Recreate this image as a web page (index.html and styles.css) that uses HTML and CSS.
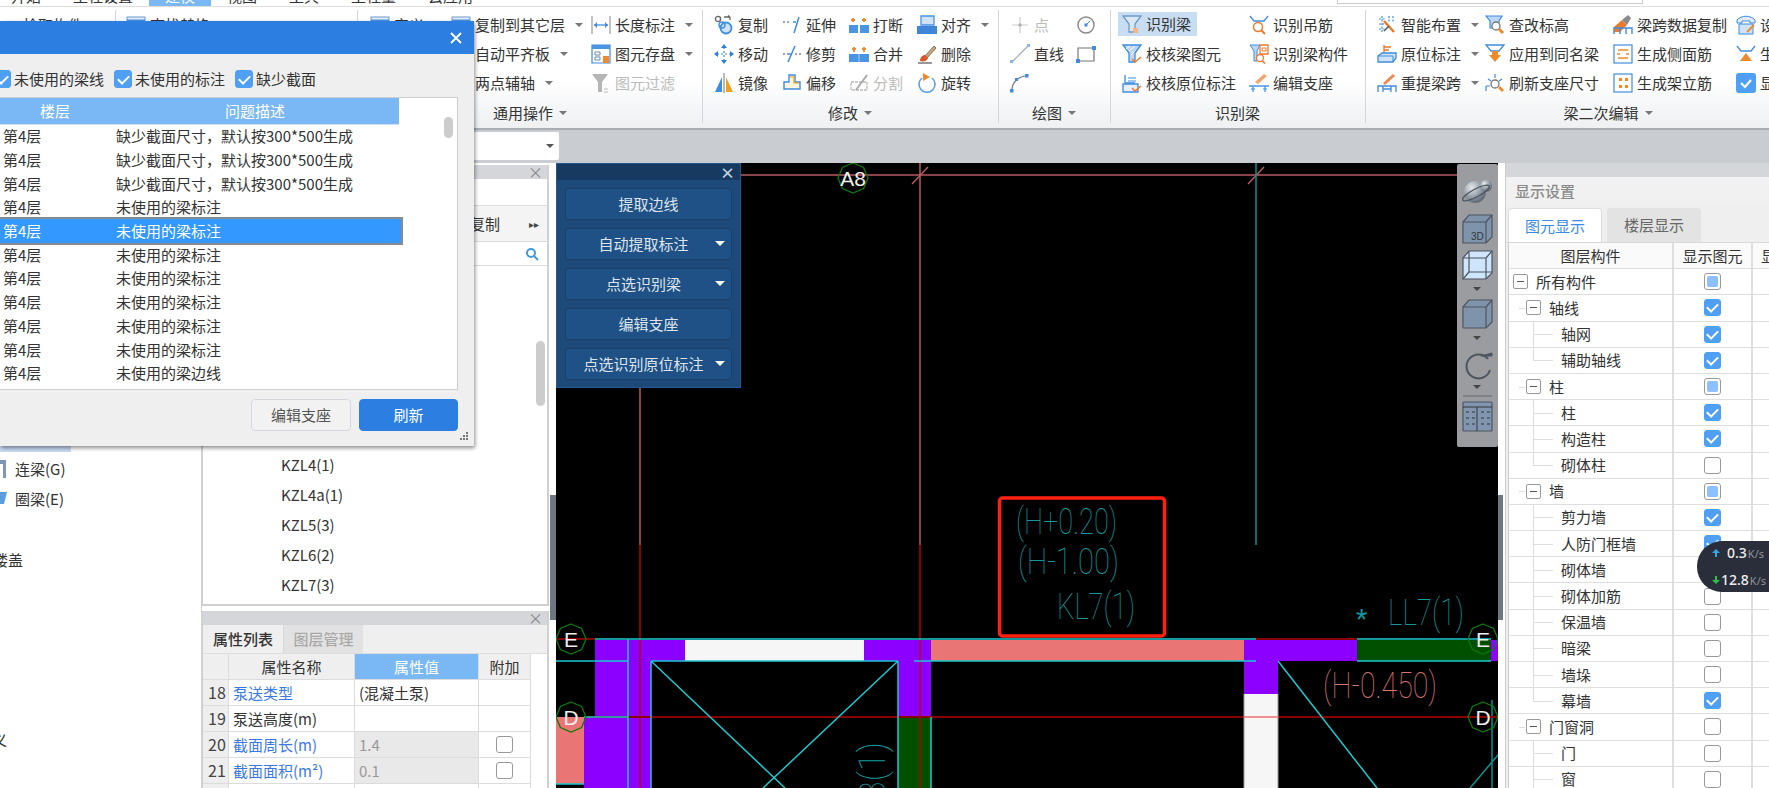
FILE: index.html
```html
<!DOCTYPE html>
<html lang="zh-CN">
<head>
<meta charset="utf-8">
<title>识别梁</title>
<link rel="stylesheet" href="styles.css">
</head>
<body>
<svg class="defs" width="0" height="0">
  <symbol id="copy" viewBox="0 0 20 20"><circle cx="4" cy="4" r="2.6" fill="none" stroke="#666" stroke-width="1.4"/><path d="M10 2h6M16 2l-2-1.500M16 2v3" fill="none" stroke="#666" stroke-width="1.3"/><circle cx="12" cy="13" r="5.500" fill="#cfe2f7" stroke="#3f8ce0" stroke-width="1.800"/><circle cx="8" cy="10" r="3" fill="none" stroke="#3f8ce0" stroke-width="1.400"/></symbol>
  <symbol id="extend" viewBox="0 0 20 20"><path d="M1 7h8" stroke="#7a8a9a" stroke-width="1.400" stroke-dasharray="2 2" fill="none"/><path d="M11 7h3M17 2l-5 16" stroke="#3f8ce0" stroke-width="1.500" fill="none"/></symbol>
  <symbol id="break" viewBox="0 0 20 20"><path d="M0 10h9v8H0zM11 10h9v8h-9z" fill="#4a94e4"/><path d="M4 3v4M2 5h4M15 3v4M13 5h4" stroke="#ee8a2c" stroke-width="1.800"/></symbol>
  <symbol id="merge" viewBox="0 0 20 20"><path d="M0 10h20v8H0z" fill="#4a94e4"/><path d="M10 10v8" stroke="#a8ccf2"/><path d="M5 3v5M3 5h4M15 3v5M13 5h4" stroke="#ee8a2c" stroke-width="1.800"/></symbol>
  <symbol id="align" viewBox="0 0 20 20"><path d="M4 1h13v9H4z" fill="#cfe2f7" stroke="#4a94e4" stroke-width="1.300"/><path d="M0 11h20v8H0z" fill="#3f86d8"/></symbol>
  <symbol id="move" viewBox="0 0 20 20"><path d="M10 3v14M3 10h14" stroke="#3f8ce0" stroke-width="1.200" stroke-dasharray="2 2"/><path d="M10 0l3 4H7zM10 20l3-4H7zM0 10l4-3v6zM20 10l-4-3v6z" fill="#2f7fd8"/></symbol>
  <symbol id="trim" viewBox="0 0 20 20"><path d="M1 10h5M13 10h6" stroke="#7a8a9a" stroke-width="1.400" stroke-dasharray="2 2" fill="none"/><path d="M6 10h4M13 2l-7 16" stroke="#3f8ce0" stroke-width="1.500" fill="none"/></symbol>
  <symbol id="brush" viewBox="0 0 20 20"><path d="M8 12L17 2l2 2-9 10z" fill="#c8a878" stroke="#6a5a48" stroke-width=".8"/><path d="M3 17c0-4 3-6 5-6l3 3c-1 3-4 4-8 3z" fill="#d8552a"/><path d="M1 19h14" stroke="#555" stroke-width="1.200"/></symbol>
  <symbol id="mirror" viewBox="0 0 20 20"><path d="M8 4v15H1z" fill="#3f8ce0"/><path d="M12 4v15h7z" fill="#f0a020"/><path d="M10 0v20" stroke="#777"/></symbol>
  <symbol id="offset" viewBox="0 0 20 20"><path d="M7 2h6v7h5v7H2V9h5z" fill="#fff6dc" stroke="#3f8ce0" stroke-width="1.400"/><path d="M8 4h4v6h5" fill="none" stroke="#f0a020" stroke-width="1.200"/></symbol>
  <symbol id="split" viewBox="0 0 20 20"><path d="M2 9h16v8H2z" fill="none" stroke="#bbb" stroke-width="1.300" stroke-dasharray="3 1"/><path d="M7 17L18 2" stroke="#aaa" stroke-width="2"/></symbol>
  <symbol id="rotate" viewBox="0 0 20 20"><path d="M5 5a8 8 0 1 0 10 0" fill="none" stroke="#5a9fe4" stroke-width="1.600"/><path d="M6 0l7 4-7 4z" fill="#ee8a2c"/></symbol>
  <symbol id="pt" viewBox="0 0 20 20"><path d="M10 2v16M2 10h16" stroke="#ccc" stroke-width="1.200"/><circle cx="10" cy="10" r="1.800" fill="#b5b5b5"/></symbol>
  <symbol id="circ" viewBox="0 0 20 20"><circle cx="10" cy="10" r="8" fill="#fff" stroke="#888" stroke-width="1.400"/><path d="M10 10l4-4" stroke="#3f8ce0"/><rect x="8.500" y="8.500" width="3" height="3" fill="#3f8ce0"/></symbol>
  <symbol id="ln" viewBox="0 0 20 20"><path d="M2 18L18 2" stroke="#9ab" stroke-width="1.200"/><rect x="0" y="16" width="3" height="3" fill="#8ab8ec"/><rect x="17" y="0" width="3" height="3" fill="#8ab8ec"/></symbol>
  <symbol id="rc" viewBox="0 0 20 20"><path d="M2 4h16v13H2z" fill="none" stroke="#777" stroke-width="1.200"/><rect x="0" y="15" width="4" height="4" fill="#3f8ce0"/><rect x="16" y="2" width="4" height="4" fill="#3f8ce0"/></symbol>
  <symbol id="arc" viewBox="0 0 20 20"><path d="M2 17C2 9 9 3 17 3" fill="none" stroke="#778" stroke-width="1.200"/><rect x="0" y="16" width="3.500" height="3.500" fill="#3f8ce0"/><rect x="15" y="1" width="3.500" height="3.500" fill="#3f8ce0"/><rect x="5" y="5" width="3" height="3" fill="#3f8ce0"/></symbol>
  <symbol id="funnel" viewBox="0 0 20 20"><path d="M1 2h18l-6 8v8H7v-8z" fill="#dbe6f2" stroke="#6b9ccc" stroke-width="1.300"/><rect x="11" y="14" width="5" height="5" fill="#f5b48a"/></symbol>
  <symbol id="fcheck" viewBox="0 0 20 20"><path d="M1 1h18l-6 8v9H7V9z" fill="#bcd6f3" stroke="#3f8ce0" stroke-width="1.300"/><path d="M4 5l4-3M7 7l6-5M9 11l3-3" stroke="#fff"/><path d="M10 15l3 3 6-5" fill="none" stroke="#ee7a2c" stroke-width="1.500"/></symbol>
  <symbol id="fcheck2" viewBox="0 0 20 20"><path d="M3 2v8h10" fill="none" stroke="#3f8ce0" stroke-width="1.300"/><path d="M6 5h8M6 8h8" stroke="#3f8ce0"/><path d="M1 11h15v8H1z" fill="#e5f0fb" stroke="#3f8ce0" stroke-width="1.300"/><path d="M10 15l3 3 6-5" fill="none" stroke="#ee7a2c" stroke-width="1.500"/></symbol>
  <symbol id="hang" viewBox="0 0 20 20"><path d="M1 1l4 5h10l4-5" fill="none" stroke="#3f8ce0" stroke-width="1.300"/><circle cx="9" cy="12" r="4.500" fill="#fff" stroke="#ee7a2c" stroke-width="1.500"/><path d="M12 15l4 4" stroke="#ee7a2c" stroke-width="2"/></symbol>
  <symbol id="comp" viewBox="0 0 20 20"><path d="M1 1h10l-3 6v10H5V7z" fill="#bcd6f3" stroke="#3f8ce0"/><path d="M11 1h8v9h-8z" fill="#fff" stroke="#ee7a2c" stroke-width="1.300"/><path d="M13 4h4v3h-4z" fill="none" stroke="#ee7a2c"/><circle cx="11" cy="14" r="3.500" fill="#fff" stroke="#ee7a2c" stroke-width="1.300"/><path d="M13 16.500l3 3" stroke="#ee7a2c" stroke-width="1.600"/></symbol>
  <symbol id="sup" viewBox="0 0 20 20"><path d="M6 9L15 1l3 2-9 8z" fill="#f2a56e"/><path d="M0 13h20" stroke="#3f8ce0" stroke-width="1.400"/><path d="M4 13v6M16 13v6M2 16h4M14 16h4" stroke="#3f8ce0" stroke-width="1.200"/></symbol>
  <symbol id="smart" viewBox="0 0 20 20"><path d="M2 4h6M2 9h5M2 14h6M5 1v16M12 1v6M16 1v6" stroke="#3f8ce0" stroke-width="1.200" stroke-dasharray="2 1.500"/><path d="M7 6l10 11" stroke="#e8782a" stroke-width="2.400"/><path d="M7 16l5-5" stroke="#555" stroke-width="1.500"/></symbol>
  <symbol id="mark" viewBox="0 0 20 20"><path d="M7 1v8M7 3h7M7 6h5" stroke="#e8782a" stroke-width="1.300"/><path d="M1 12l4-3h14v5l-3 4H1z" fill="#cfe2f7" stroke="#3f8ce0" stroke-width="1.300"/><path d="M1 12h15v6" fill="none" stroke="#3f8ce0"/></symbol>
  <symbol id="retr" viewBox="0 0 20 20"><path d="M6 10L16 1l2 2-10 9z" fill="#ee8a4c"/><path d="M1 19v-6h18v6M6 19v-6M14 19v-6M6 16h8" fill="none" stroke="#3f8ce0" stroke-width="1.300"/></symbol>
  <symbol id="elev" viewBox="0 0 20 20"><path d="M1 1h16l-3 5v7H5V6z" fill="#bcd6f3" stroke="#3f8ce0" stroke-width="1.200"/><circle cx="11" cy="11" r="4" fill="#fff" stroke="#777" stroke-width="1.300"/><path d="M14 14l4 4" stroke="#ee8a2c" stroke-width="3"/></symbol>
  <symbol id="apply" viewBox="0 0 20 20"><path d="M1 1h18l-5 6H6z" fill="#fff" stroke="#3f8ce0" stroke-width="1.300"/><path d="M7 7h6v4h3l-6 7-6-7h3z" fill="#ee8a2c"/></symbol>
  <symbol id="refr" viewBox="0 0 20 20"><circle cx="10" cy="11" r="4" fill="#fff" stroke="#777" stroke-width="1.300"/><path d="M10 1v4M3 6l3 2M17 6l-3 2M1 13h4M1 13v5" stroke="#3f8ce0" stroke-width="1.200"/><path d="M14 14l4 4" stroke="#ee8a2c" stroke-width="3"/></symbol>
  <symbol id="bcopy" viewBox="0 0 20 20"><path d="M1 12l8-7 5 5-7 7H1z" fill="#ee7a2c"/><path d="M9 5l6-5 3 3-4 7z" fill="#8a8a8a"/><path d="M1 19v-6h18v6M7 19v-6M13 19v-6" fill="none" stroke="#3f8ce0" stroke-width="1.400"/></symbol>
  <symbol id="side" viewBox="0 0 20 20"><rect x="1" y="1" width="18" height="18" fill="#fff" stroke="#3f8ce0" stroke-width="1.200"/><path d="M5 6h10M5 14h10M4 10h3M13 10h3" stroke="#ee8a2c" stroke-width="1.300"/></symbol>
  <symbol id="stand" viewBox="0 0 20 20"><rect x="1" y="1" width="18" height="18" fill="#fff" stroke="#3f8ce0" stroke-width="1.200"/><path d="M6 5h3v3H6zM12 5h3v3h-3zM6 12h3v3H6zM12 12h3v3h-3z" fill="#ee8a2c"/></symbol>
  <symbol id="tel" viewBox="0 0 20 20"><path d="M1 5c4-5 14-5 18 0v3h-5V6H6v2H1z" fill="#dfeaf6" stroke="#3f8ce0"/><path d="M3 9h14v10H3z" fill="#cfe2f7" stroke="#3f8ce0"/><path d="M11 17l7-7" stroke="#ee8a2c" stroke-width="2"/></symbol>
  <symbol id="gen" viewBox="0 0 20 20"><path d="M1 2l4 5h10l4-5" fill="none" stroke="#3f8ce0" stroke-width="1.300"/><path d="M10 9l6 8H4z" fill="#ee8a2c"/></symbol>
  <symbol id="chk" viewBox="0 0 20 20"><rect width="20" height="20" rx="3" fill="#4f9ff5"/><path d="M5 10l4 4 6-7" fill="none" stroke="#fff" stroke-width="2.200"/></symbol>
  <symbol id="flt" viewBox="0 0 20 20"><path d="M1 1h16l-6 8v10H7V9z" fill="#b5b5b5"/><path d="M13 16h4M13 19h4" stroke="#bbb"/></symbol>
  <symbol id="len" viewBox="0 0 20 20"><path d="M1 1v18M19 1v18" stroke="#888"/><path d="M3 10h14" stroke="#3f8ce0" stroke-width="1.300"/><path d="M3 10l3-3v6zM17 10l-3-3v6z" fill="#3f8ce0"/></symbol>
  <symbol id="save" viewBox="0 0 20 20"><path d="M1 1h18v18H1z" fill="#fff" stroke="#3f8ce0" stroke-width="1.200"/><path d="M1 1h18v4H1z" fill="#4a94e4"/><path d="M4 8h5v3H4zM4 13h5v3H4z" fill="none" stroke="#6a8aa8"/><path d="M12 12h6v7h-6z" fill="#ee8a2c"/></symbol>
  <symbol id="tb" viewBox="0 0 20 20"><rect x="1" y="2" width="18" height="16" fill="#e4eef9" stroke="#6a9ccc"/><path d="M1 6h18" stroke="#4a94e4" stroke-width="3"/></symbol>
  <symbol id="oct" viewBox="-16 -16 32 32"><polygon points="0,-15 10.600,-10.600 15,0 10.600,10.600 0,15 -10.600,10.600 -15,0 -10.600,-10.600" fill="none" stroke="#0b7a0b" stroke-width="1.300"/></symbol>
</svg>

<div class="tabs">
  <span class="tab first">开始</span><span class="tab">工程设置</span><span class="tab active">建模</span><span class="tab">视图</span><span class="tab">工具</span><span class="tab">工程量</span><span class="tab">云应用</span>
  <span class="searchbox"></span>
</div>

<div class="ribbon">
  <section class="group g0">
    <div class="tools"><div class="tool"><span>拾取构件</span></div></div>
    <div class="lab">选择</div>
  </section>
  <section class="group g1">
    <div class="tools">
      <div class="tool"><svg class="ic"><use href="#tb"/></svg><span>查找替换</span></div>
      <div class="tool"><svg class="ic"><use href="#tb"/></svg><span>识别楼层表</span></div>
    </div>
    <div class="lab">CAD操作</div>
  </section>
  <section class="group g2">
    <div class="tools">
      <div class="tool"><svg class="ic"><use href="#tb"/></svg><span>定义</span></div>
      <div class="tool"></div><div class="tool"></div>
      <div class="tool"><svg class="ic"><use href="#tb"/></svg><span>复制到其它层</span><i class="caret"></i></div>
      <div class="tool"><svg class="ic"><use href="#tb"/></svg><span>自动平齐板</span><i class="caret"></i></div>
      <div class="tool"><svg class="ic"><use href="#tb"/></svg><span>两点辅轴</span><i class="caret"></i></div>
      <div class="tool"><svg class="ic"><use href="#len"/></svg><span>长度标注</span><i class="caret"></i></div>
      <div class="tool"><svg class="ic"><use href="#save"/></svg><span>图元存盘</span><i class="caret"></i></div>
      <div class="tool off"><svg class="ic"><use href="#flt"/></svg><span>图元过滤</span></div>
    </div>
    <div class="lab">通用操作<i class="caret"></i></div>
  </section>
  <section class="group g3">
    <div class="tools">
      <div class="tool"><svg class="ic"><use href="#copy"/></svg><span>复制</span></div>
      <div class="tool"><svg class="ic"><use href="#move"/></svg><span>移动</span></div>
      <div class="tool"><svg class="ic"><use href="#mirror"/></svg><span>镜像</span></div>
      <div class="tool"><svg class="ic"><use href="#extend"/></svg><span>延伸</span></div>
      <div class="tool"><svg class="ic"><use href="#trim"/></svg><span>修剪</span></div>
      <div class="tool"><svg class="ic"><use href="#offset"/></svg><span>偏移</span></div>
      <div class="tool"><svg class="ic"><use href="#break"/></svg><span>打断</span></div>
      <div class="tool"><svg class="ic"><use href="#merge"/></svg><span>合并</span></div>
      <div class="tool off"><svg class="ic"><use href="#split"/></svg><span>分割</span></div>
      <div class="tool"><svg class="ic"><use href="#align"/></svg><span>对齐</span><i class="caret"></i></div>
      <div class="tool"><svg class="ic"><use href="#brush"/></svg><span>删除</span></div>
      <div class="tool"><svg class="ic"><use href="#rotate"/></svg><span>旋转</span></div>
    </div>
    <div class="lab">修改<i class="caret"></i></div>
  </section>
  <section class="group g4">
    <div class="tools">
      <div class="tool off"><svg class="ic"><use href="#pt"/></svg><span>点</span></div>
      <div class="tool"><svg class="ic"><use href="#ln"/></svg><span>直线</span></div>
      <div class="tool"><svg class="ic"><use href="#arc"/></svg></div>
      <div class="tool"><svg class="ic"><use href="#circ"/></svg></div>
      <div class="tool"><svg class="ic"><use href="#rc"/></svg></div>
    </div>
    <div class="lab">绘图<i class="caret"></i></div>
  </section>
  <section class="group g5">
    <div class="tools">
      <div class="tool hl"><svg class="ic"><use href="#funnel"/></svg><span>识别梁</span></div>
      <div class="tool"><svg class="ic"><use href="#fcheck"/></svg><span>校核梁图元</span></div>
      <div class="tool"><svg class="ic"><use href="#fcheck2"/></svg><span>校核原位标注</span></div>
      <div class="tool"><svg class="ic"><use href="#hang"/></svg><span>识别吊筋</span></div>
      <div class="tool"><svg class="ic"><use href="#comp"/></svg><span>识别梁构件</span></div>
      <div class="tool"><svg class="ic"><use href="#sup"/></svg><span>编辑支座</span></div>
    </div>
    <div class="lab">识别梁</div>
  </section>
  <section class="group g6">
    <div class="tools">
      <div class="tool"><svg class="ic"><use href="#smart"/></svg><span>智能布置</span><i class="caret"></i></div>
      <div class="tool"><svg class="ic"><use href="#mark"/></svg><span>原位标注</span><i class="caret"></i></div>
      <div class="tool"><svg class="ic"><use href="#retr"/></svg><span>重提梁跨</span><i class="caret"></i></div>
      <div class="tool"><svg class="ic"><use href="#elev"/></svg><span>查改标高</span></div>
      <div class="tool"><svg class="ic"><use href="#apply"/></svg><span>应用到同名梁</span></div>
      <div class="tool"><svg class="ic"><use href="#refr"/></svg><span>刷新支座尺寸</span></div>
      <div class="tool"><svg class="ic"><use href="#bcopy"/></svg><span>梁跨数据复制</span></div>
      <div class="tool"><svg class="ic"><use href="#side"/></svg><span>生成侧面筋</span></div>
      <div class="tool"><svg class="ic"><use href="#stand"/></svg><span>生成架立筋</span></div>
      <div class="tool"><svg class="ic"><use href="#tel"/></svg><span>设置</span></div>
      <div class="tool"><svg class="ic"><use href="#gen"/></svg><span>生成</span></div>
      <div class="tool"><svg class="ic"><use href="#chk"/></svg><span>显示</span></div>
    </div>
    <div class="lab">梁二次编辑<i class="caret"></i></div>
  </section>
</div>

<div class="band"><div class="select"><i class="caret dark"></i></div></div>

<main class="main">
  <nav class="nav">
    <div class="nav-item current">过梁</div>
    <div class="nav-item"><svg class="nav-ic" viewBox="0 0 7 20"><path d="M0 1h6v18H3V5H0z" fill="#7d97b5"/></svg>连梁(G)</div>
    <div class="nav-item"><svg class="nav-ic" viewBox="0 0 7 20"><path d="M0 3h7l-3 12H0z" fill="#5b9be0"/></svg>圈梁(E)</div>
    <div class="nav-item flush gap1">楼盖</div>
    <div class="nav-item flush gap2">定义</div>
  </nav>

  <div class="mid">
    <section class="complist">
      <div class="phead"><span class="px">×</span></div>
      <div class="blank"></div>
      <div class="ctabs"><span class="ctab">复制</span><span class="more">▸▸</span></div>
      <div class="csearch"><svg class="sic" viewBox="0 0 14 14"><circle cx="6" cy="6" r="4" fill="none" stroke="#3f9ae0" stroke-width="2"/><path d="M9 9l4 4" stroke="#3f9ae0" stroke-width="2"/></svg></div>
      <div class="clist">
        <div class="thumb2"></div>
        <div class="citem">KZL4(1)</div>
        <div class="citem">KZL4a(1)</div>
        <div class="citem">KZL5(3)</div>
        <div class="citem">KZL6(2)</div>
        <div class="citem">KZL7(3)</div>
      </div>
    </section>
    <section class="props">
      <div class="phead"><span class="px">×</span></div>
      <div class="ptabs"><span class="ptab on">属性列表</span><span class="ptab">图层管理</span></div>
      <div class="pgrid">
        <div class="pr head"><div></div><div class="c">属性名称</div><div class="c val">属性值</div><div class="c">附加</div></div>
        <div class="pr"><div class="n">18</div><div class="link">泵送类型</div><div>(混凝土泵)</div><div></div></div>
        <div class="pr"><div class="n">19</div><div>泵送高度(m)</div><div></div><div></div></div>
        <div class="pr"><div class="n">20</div><div class="link">截面周长(m)</div><div class="ro">1.4</div><div class="c"><span class="cb"></span></div></div>
        <div class="pr"><div class="n">21</div><div class="link">截面面积(m²)</div><div class="ro">0.1</div><div class="c"><span class="cb"></span></div></div>
        <div class="pr"><div class="n">22</div><div class="link">起点顶标高(m)</div><div></div><div class="c"><span class="cb"></span></div></div>
      </div>
    </section>
  </div>
  <div class="strip"><span class="sgrab"></span></div>

  <div class="canvas">
    <svg class="cad" viewBox="556 163 942 625" width="942" height="625">
      <g class="purple">
        <rect x="595" y="640" width="35" height="77"/><rect x="584" y="717" width="46" height="71"/><rect x="630" y="640" width="55" height="21"/><rect x="630" y="661" width="21" height="127"/><rect x="864" y="640" width="67" height="21"/><rect x="898" y="661" width="33" height="56"/><rect x="1244" y="640" width="113" height="21"/><rect x="1244" y="661" width="34" height="33"/><rect x="1491" y="640" width="7" height="21"/>
      </g>
      <g class="white"><rect x="685" y="640" width="179" height="21"/><rect x="1244" y="694" width="34" height="94"/></g>
      <g class="green"><rect x="898" y="717" width="33" height="71"/><rect x="1357" y="640" width="134" height="21"/></g>
      <g class="salmon"><rect x="931" y="640" width="313" height="21"/><rect x="556" y="717" width="28" height="67"/></g>

      <g class="l-dim">
        <path d="M741 175H1498M640 388V545M920 163V545"/>
        <path d="M912 184L928 167M1248 184L1264 167"/>
      </g>
      <path class="l-teal" d="M1256 163V545M1492 700V788M1498 755L1470 788"/>
      <path class="l-red" d="M640 545V788M920 545V788M556 639H595M1256 639H1357"/>
      <path class="l-dark" d="M584 717H1498"/>
      <path class="l-pale" d="M1244 717H1278"/>
      <path class="l-cyan" d="M595 639H1256M1357 639H1491M1357 661H1491M556 661H628M651 661H898M914 661H1256M628 639V788M651 661V788M898 661V788M931 717V788M584 717H628M556 784H584M651 661L785 788M898 661L763 788M1278 661L1377 788"/>
      <path class="l-grey" d="M1244 694V788M1278 694V788"/>

      <rect class="redbox" x="999.500" y="498" width="165" height="138" rx="3"/>

      <text class="cadt" x="1016" y="534" textLength="101" lengthAdjust="spacingAndGlyphs">(H+0.20)</text>
      <text class="cadt" x="1018" y="574" textLength="101" lengthAdjust="spacingAndGlyphs">(H-1.00)</text>
      <text class="cadt" x="1057" y="619" textLength="78" lengthAdjust="spacingAndGlyphs">KL7(1)</text>
      <text class="cadt star" x="1356" y="628">*</text>
      <text class="cadt" x="1388" y="625" textLength="76" lengthAdjust="spacingAndGlyphs">LL7(1)</text>
      <text class="cadt pink" x="1323" y="698" textLength="114" lengthAdjust="spacingAndGlyphs">(H-0.450)</text>
      <text class="cadt" transform="translate(885 800) rotate(-90)" textLength="58" lengthAdjust="spacingAndGlyphs">3(1)</text>

      <use href="#oct" x="837" y="162" width="32" height="32"/>
      <use href="#oct" x="555" y="623" width="32" height="32"/>
      <use href="#oct" x="555" y="701" width="32" height="32"/>
      <use href="#oct" x="1467" y="623" width="32" height="32"/>
      <use href="#oct" x="1467" y="701" width="32" height="32"/>
      <text class="axis" x="853" y="186">A8</text>
      <text class="axis" x="571" y="647">E</text>
      <text class="axis" x="571" y="725">D</text>
      <text class="axis" x="1483" y="647">E</text>
      <text class="axis" x="1483" y="725">D</text>
    </svg>

    <div class="floatp">
      <div class="fhead"><span class="fx">×</span></div>
      <div class="fbtn">提取边线</div>
      <div class="fbtn drop">自动提取标注</div>
      <div class="fbtn drop">点选识别梁</div>
      <div class="fbtn">编辑支座</div>
      <div class="fbtn drop">点选识别原位标注</div>
    </div>

    <div class="viewbar">
      <svg viewBox="0 0 41 283" width="41" height="283">
        <defs><radialGradient id="sph" cx=".35" cy=".3" r=".8"><stop offset="0" stop-color="#e6eaee"/><stop offset="1" stop-color="#4d5a6a"/></radialGradient></defs>
        <circle cx="18" cy="28" r="11" fill="url(#sph)"/><circle cx="29" cy="22" r="6" fill="url(#sph)"/>
        <ellipse cx="19" cy="29" rx="15" ry="4" transform="rotate(-28 19 29)" fill="none" stroke="#4a525c" stroke-width="1.200"/>
        <path d="M6 58l6-7h23v22l-6 6H6z" fill="#7f93ab" stroke="#4d5560" stroke-width="1.200"/><path d="M6 58h23v21M29 58l6-7" fill="none" stroke="#4d5560" stroke-width="1.200"/><text class="vt" x="14" y="76">3D</text>
        <path d="M6 94l6-7h23v22l-6 6H6z" fill="#cfe5fb" stroke="#4d5560" stroke-width="1.200"/><path d="M12 87v21h23M12 108l-6 7M6 94h23v21M29 94l6-7" fill="none" stroke="#4d5560" stroke-width="1.200"/>
        <path d="M16 123h8l-4 4z" fill="#444"/>
        <path d="M6 143l6-7h23v22l-6 6H6z" fill="#7f93ab" stroke="#4d5560" stroke-width="1.200"/><path d="M6 143h23v21M29 143l6-7" fill="none" stroke="#4d5560" stroke-width="1.200"/>
        <path d="M16 172h8l-4 4z" fill="#444"/>
        <path d="M31 195a12 12 0 1 0 2 11" fill="none" stroke="#4d5560" stroke-width="2"/><path d="M24 192h11v-3z" fill="#4d5560" stroke="#4d5560"/>
        <path d="M16 221h8l-4 4z" fill="#444"/>
        <path d="M6 232h29" stroke="#66696e"/>
        <rect x="6" y="238" width="29" height="29" rx="1" fill="#8196ae" stroke="#4d5560" stroke-width="1.200"/><path d="M6 243h29M20 243v24M9 248h3M15 248h3M9 254h3M15 254h3M9 260h3M15 260h3M24 248h3M30 248h3M24 254h3M30 254h3M24 260h3M30 260h3" stroke="#30363e"/>
      </svg>
    </div>
  </div>
  <div class="strip right"><span class="sgrab"></span></div>

  <aside class="disp">
    <div class="phead"></div>
    <div class="dtitle">显示设置</div>
    <div class="dtabs"><span class="dtab on">图元显示</span><span class="dtab">楼层显示</span></div>
    <div class="dgrid">
      <div class="dr head"><div class="c">图层构件</div><div class="c">显示图元</div><div class="third">显示名称</div></div>
      <div class="dr"><div class="t d0"><i class="ex"></i>所有构件</div><div class="c"><span class="cb part"></span></div><div></div></div>
      <div class="dr"><div class="t d1"><i class="ex"></i>轴线</div><div class="c"><span class="cb on"></span></div><div></div></div>
      <div class="dr"><div class="t d2">轴网</div><div class="c"><span class="cb on"></span></div><div></div></div>
      <div class="dr"><div class="t d2 end">辅助轴线</div><div class="c"><span class="cb on"></span></div><div></div></div>
      <div class="dr"><div class="t d1"><i class="ex"></i>柱</div><div class="c"><span class="cb part"></span></div><div></div></div>
      <div class="dr"><div class="t d2">柱</div><div class="c"><span class="cb on"></span></div><div></div></div>
      <div class="dr"><div class="t d2">构造柱</div><div class="c"><span class="cb on"></span></div><div></div></div>
      <div class="dr"><div class="t d2 end">砌体柱</div><div class="c"><span class="cb"></span></div><div></div></div>
      <div class="dr"><div class="t d1"><i class="ex"></i>墙</div><div class="c"><span class="cb part"></span></div><div></div></div>
      <div class="dr"><div class="t d2">剪力墙</div><div class="c"><span class="cb on"></span></div><div></div></div>
      <div class="dr"><div class="t d2">人防门框墙</div><div class="c"><span class="cb on"></span></div><div></div></div>
      <div class="dr"><div class="t d2">砌体墙</div><div class="c"><span class="cb on"></span></div><div></div></div>
      <div class="dr"><div class="t d2">砌体加筋</div><div class="c"><span class="cb"></span></div><div></div></div>
      <div class="dr"><div class="t d2">保温墙</div><div class="c"><span class="cb"></span></div><div></div></div>
      <div class="dr"><div class="t d2">暗梁</div><div class="c"><span class="cb"></span></div><div></div></div>
      <div class="dr"><div class="t d2">墙垛</div><div class="c"><span class="cb"></span></div><div></div></div>
      <div class="dr"><div class="t d2 end">幕墙</div><div class="c"><span class="cb on"></span></div><div></div></div>
      <div class="dr"><div class="t d1"><i class="ex"></i>门窗洞</div><div class="c"><span class="cb"></span></div><div></div></div>
      <div class="dr"><div class="t d2">门</div><div class="c"><span class="cb"></span></div><div></div></div>
      <div class="dr"><div class="t d2">窗</div><div class="c"><span class="cb"></span></div><div></div></div>
    </div>
  </aside>
</main>

<div class="dialog">
  <div class="dtbar"><svg class="dclose" viewBox="0 0 12 12"><path d="M1 1l10 10M11 1L1 11" stroke="#fff" stroke-width="1.800"/></svg></div>
  <div class="filters">
    <label class="fl"><span class="cb on big"></span>未使用的梁线</label>
    <label class="fl"><span class="cb on big"></span>未使用的标注</label>
    <label class="fl"><span class="cb on big"></span>缺少截面</label>
  </div>
  <div class="tbl">
    <div class="thumb"></div>
    <div class="trow thead"><span class="tc1">楼层</span><span class="tc2">问题描述</span></div>
    <div class="trow"><span>第4层</span><span>缺少截面尺寸，默认按300*500生成</span></div>
    <div class="trow"><span>第4层</span><span>缺少截面尺寸，默认按300*500生成</span></div>
    <div class="trow"><span>第4层</span><span>缺少截面尺寸，默认按300*500生成</span></div>
    <div class="trow"><span>第4层</span><span>未使用的梁标注</span></div>
    <div class="trow sel"><span>第4层</span><span>未使用的梁标注</span></div>
    <div class="trow"><span>第4层</span><span>未使用的梁标注</span></div>
    <div class="trow"><span>第4层</span><span>未使用的梁标注</span></div>
    <div class="trow"><span>第4层</span><span>未使用的梁标注</span></div>
    <div class="trow"><span>第4层</span><span>未使用的梁标注</span></div>
    <div class="trow"><span>第4层</span><span>未使用的梁标注</span></div>
    <div class="trow"><span>第4层</span><span>未使用的梁边线</span></div>
  </div>
  <div class="dbtns"><span class="btn">编辑支座</span><span class="btn pri">刷新</span></div>
  <svg class="grip" viewBox="0 0 10 10"><path d="M7 1h2v2H7zM4 4h2v2H4zM7 4h2v2H7zM1 7h2v2H1zM4 7h2v2H4zM7 7h2v2H7z" fill="#777"/></svg>
</div>

<div class="speed">
  <div class="sp"><svg class="arr" viewBox="0 0 10 10"><path d="M5 1l4 4H6v4H4V5H1z" fill="#35a8e8"/></svg><b class="up">0.3</b><small>K/s</small></div>
  <div class="sp"><svg class="arr" viewBox="0 0 10 10"><path d="M5 9l4-4H6V1H4v4H1z" fill="#2cc04a"/></svg><b>12.8</b><small>K/s</small></div>
</div>
</body>
</html>
```
FILE: styles.css
```css
* { box-sizing: border-box; }
html, body { margin: 0; padding: 0; }
body {
  width: 1769px; height: 788px; overflow: hidden; position: relative;
  background: #fff; color: #333;
  font: 15px/1.2 "Noto Sans CJK SC", "Noto Sans", sans-serif;
}
.defs { position: absolute; }
i { font-style: normal; }

/* top tabs */
.tabs { height: 7px; display: flex; align-items: flex-end; overflow: hidden; border-bottom: 1px solid #dedede; }
.tab { height: 20px; line-height: 20px; padding: 0 16px; flex: none; }
.tab.first { margin-left: -5px; }
.tab.active { background: #7ab8f5; color: #fff; }
.searchbox { width: 306px; height: 12px; margin: 0 126px 2px auto; border: 1px solid #ccc; background: #fff; }

/* ribbon */
.ribbon {
  height: 123px; display: flex; overflow: hidden;
  background: linear-gradient(#fff 60%, #eef0f2);
  border-bottom: 2px solid #a9adb1;
}
.group { flex: none; display: flex; flex-direction: column; padding-top: 3px; position: relative; }
.group + .group::before { content: ""; position: absolute; left: 0; top: 3px; bottom: 5px; border-left: 1px solid #d5d7da; }
.tools { display: grid; grid-auto-flow: column; grid-template-rows: repeat(3, 29px); height: 87px; }
.tool { display: flex; align-items: center; gap: 4px; white-space: nowrap; min-width: 0; }
.tool.off { color: #bbb; }
.ic { width: 20px; height: 20px; flex: none; }
.tool.hl { background: #c8dcf2; margin: 2px 0 3px -4px; padding-left: 4px; width: 79px; }
.caret { display: inline-block; width: 0; height: 0; margin-left: 6px; border: 4px solid transparent; border-top: 4px solid #777; border-bottom: 0; }
.lab { height: 31px; display: flex; align-items: center; justify-content: center; margin-left: -12px; }
.g0 { width: 115px; padding-left: 23px; }
.g1 { width: 242px; padding-left: 11px; }
.g1 .tools { grid-template-columns: 101px 120px; }
.g2 { width: 345px; padding-left: 13px; }
.g2 .tools { grid-template-columns: 81px 140px 110px; }
.g3 { width: 296px; padding-left: 12px; }
.g3 .tools { grid-template-columns: 68px 67px 68px 80px; }
.g4 { width: 112px; padding-left: 12px; }
.g4 .tools { grid-template-columns: 66px 30px; }
.g5 { width: 255px; padding-left: 12px; }
.g5 .tools { grid-template-columns: 127px 110px; }
.g6 { width: 404px; padding-left: 12px; }
.g6 .tools { grid-template-columns: 108px 128px 123px 60px; }
.g6 .lab { padding-left: 82px; }

/* band */
.band { height: 33px; padding-top: 2px; background: #c9ccd0; }
.select { width: 559px; height: 28px; background: #fff; border-radius: 0 2px 2px 0; display: flex; align-items: center; justify-content: flex-end; padding-right: 5px; }
.caret.dark { border-top-color: #555; }

/* main */
.main { display: flex; height: 625px; }
.nav { width: 202px; flex: none; background: #fff; border-right: 1px solid #d2d2d2; padding-top: 259px; }
.nav-item { height: 30px; display: flex; align-items: center; padding-left: 15px; position: relative; }
.nav-item.current { width: 71px; background: #c8dcf2; margin-bottom: 2px; }
.nav-ic { position: absolute; left: 0; top: 5px; width: 7px; height: 20px; }
.nav-item.flush { padding-left: 0; margin-left: -7px; }
.gap1 { margin-top: 31px; }
.nav-item.gap2 { margin-top: 150px; margin-left: -23px; }

.mid { width: 347px; flex: none; display: flex; flex-direction: column; background: #fff; }
.phead { height: 14px; background: #d4d6d9; display: flex; align-items: center; justify-content: flex-end; flex: none; }
.px { color: #888; font-size: 15px; line-height: 14px; padding-right: 4px; }
.complist { height: 441px; margin-top: 2px; flex: none; display: flex; flex-direction: column; border: solid #d0d0d0; border-width: 0 2px 2px 1px; }
.blank { height: 27px; border-bottom: 1px solid #ddd; flex: none; }
.ctabs { height: 36px; display: flex; align-items: center; justify-content: space-between; padding: 0 8px 0 267px; background: #f4f4f4; border-bottom: 1px solid #ddd; flex: none; }
.more { font-size: 10px; color: #444; }
.csearch { height: 24px; display: flex; align-items: center; justify-content: flex-end; padding-right: 8px; border-bottom: 1px solid #ddd; flex: none; }
.sic { width: 14px; height: 14px; }
.clist { flex: 1; position: relative; padding-top: 184px; padding-left: 78px; }
.citem { height: 30px; display: flex; align-items: center; }
.thumb2 { position: absolute; right: 2px; top: 75px; width: 9px; height: 65px; background: #ccc; border-radius: 5px; }

.props { margin-top: 5px; flex: 1; border-right: 2px solid #d0d0d0; border-left: 1px solid #d0d0d0; }
.ptabs { height: 29px; background: #efefef; display: flex; border-bottom: 1px solid #ddd; }
.ptab { width: 80px; display: flex; align-items: center; justify-content: center; color: #aaa; background: #e2e2e2; font-weight: 500; border-left: 1px solid #d8d8d8; }
.ptab.on { background: #efefef; color: #333; border-left: 0; }
.pgrid { width: 328px; }
.pr { display: grid; grid-template-columns: 26px 126px 124px 52px; height: 26px; }
.pr > div { display: flex; align-items: center; padding-left: 4px; border: solid #dcdcdc; border-width: 0 1px 1px 0; min-width: 0; white-space: nowrap; }
.pr .n { background: #eee; font-size: 16px; padding-left: 5px; color: #444; }
.pr .c { justify-content: center; padding-left: 0; }
.pr.head > div { background: #efefef; }
.pr.head .val { background: #7ab8f5; color: #fff; }
.link { color: #3b78e7; }
.ro { background: #e9e9e9; color: #999; }

.strip { width: 7px; flex: none; background: #fff; position: relative; }
.strip.right { width: 5px; margin-right: 2px; }
.sgrab { position: absolute; left: 0; right: 0; top: 332px; height: 125px; background: #6f7880; }
.strip:not(.right) .sgrab { left: 1px; }

.canvas { width: 942px; flex: none; position: relative; background: #000; overflow: hidden; }
.cad { display: block; }
.purple rect { fill: #8b00ff; }
.white rect { fill: #f6f6f6; }
.green rect { fill: #005000; }
.salmon rect { fill: #ea7575; }
.cad path { fill: none; }
.l-dim { stroke: #b85a60; stroke-width: 1.500; fill: none; }
.l-teal { stroke: #0e8f92; stroke-width: 1.500; }
.l-red { stroke: #b30000; stroke-width: 1.500; }
.l-dark { stroke: #8b0000; stroke-width: 2; }
.l-pale { stroke: #f09090; stroke-width: 2; }
.l-cyan { stroke: #1bc8d0; stroke-width: 1.500; }
.l-grey { stroke: #999; stroke-width: 1; }
.redbox { fill: none; stroke: #ff2010; stroke-width: 3.500; }
.cadt { font-family: Roboto, "Liberation Sans", sans-serif; font-weight: 100; font-size: 37px; fill: #12989c; }
.cadt.pink { fill: #d97474; }
.cadt.star { font-size: 26px; font-weight: 400; }
.axis { font-family: "Liberation Sans", sans-serif; font-size: 21px; fill: #eee; text-anchor: middle; }

.floatp { position: absolute; left: 0; top: 0; width: 185px; height: 225px; background: #1d4a78; border: 1px solid #24588f; padding: 0 8px; }
.fhead { height: 16px; margin: 0 -8px 8px; background: #173a60; display: flex; align-items: center; justify-content: flex-end; padding-right: 5px; }
.fx { color: #c8d4e0; font-size: 15px; line-height: 15px; font-weight: 700; }
.fbtn { height: 32px; margin-bottom: 8px; display: flex; align-items: center; justify-content: center; color: #dde4ec; background: #1f5186; border: 1px solid #18406b; border-radius: 3px; position: relative; }
.fbtn.drop { padding-right: 10px; }
.fbtn.drop::after { content: ""; position: absolute; right: 6px; top: 12px; border: 5px solid transparent; border-top: 5px solid #fff; border-bottom: 0; }

.viewbar { position: absolute; right: 0; top: 1px; width: 41px; height: 283px; background: #9a9ca0; border-radius: 2px; }
.viewbar svg { display: block; }
.vt { font-family: "Liberation Sans", sans-serif; font-size: 10px; fill: #30363e; }

.disp { flex: 1; min-width: 0; background: #efefef; border-left: 1px solid #ccc; overflow: hidden; }
.dtitle { height: 27px; padding-left: 9px; display: flex; align-items: center; color: #8a8a8a; font-weight: 500; background: #f1f1f1; }
.dtabs { height: 39px; display: flex; gap: 5px; padding: 4px 0 0 2px; border-bottom: 1px solid #d8d8d8; }
.dtab { width: 94px; display: flex; align-items: center; justify-content: center; color: #666; background: #e3e3e3; border-radius: 4px 4px 0 0; }
.dtab.on { background: #fff; color: #3b8be8; border: 1px solid #ddd; border-bottom: 0; }
.dgrid { background: #fff; margin-left: 2px; border-left: 1px solid #ccc; }
.dr { display: grid; grid-template-columns: 165px 79px 20px; height: 26.200px; }
.dr > div { display: flex; align-items: center; border: solid #dedede; border-width: 0 2px 1.500px 0; min-width: 0; white-space: nowrap; }
.dr .c { justify-content: center; }
.dr.head > div { background: #fafafa; }
.dr .third { overflow: hidden; padding-left: 8px; border-right: 0; }
.t { position: relative; }
.d0 { padding-left: 4px; }
.d1 { padding-left: 17px; }
.d2 { padding-left: 52px; }
.ex { width: 15px; height: 15px; flex: none; margin-right: 8px; border: 1px solid #999; border-radius: 2px; background: #fff; display: flex; align-items: center; justify-content: center; }
.ex::before { content: ""; width: 7px; border-top: 1px solid #555; }
.d1::before { content: ""; position: absolute; left: 10px; top: 50%; width: 6px; border-top: 1px solid #ddd; }
.d2::before { content: ""; position: absolute; left: 24px; top: 50%; width: 20px; border-top: 1px solid #ddd; }
.d2::after { content: ""; position: absolute; left: 24px; top: 0; bottom: 0; border-left: 1px solid #ddd; }
.d2.end::after { bottom: 50%; }

.cb { width: 17px; height: 17px; flex: none; display: flex; align-items: center; justify-content: center; border: 1.500px solid #9a9a9a; border-radius: 3px; background: #fff; }
.cb.on { background: #4f9ff5; border-color: #4f9ff5; }
.cb.on::after { content: ""; width: 9px; height: 5px; margin-top: -2px; border-left: 2px solid #fff; border-bottom: 2px solid #fff; transform: rotate(-45deg); }
.cb.part::after { content: ""; width: 11px; height: 11px; background: #8cc0ff; border-radius: 2px; }
.cb.big { width: 18px; height: 18px; margin-right: 3px; }

/* dialog */
.dialog { position: absolute; left: 0; top: 21px; width: 474px; height: 425px; background: #efefef; box-shadow: 1px 2px 4px rgba(0,0,0,.45); overflow: hidden; }
.dtbar { height: 33px; background: #2c7fe0; display: flex; align-items: center; justify-content: flex-end; padding: 0 12px 0 0; }
.dclose { width: 12px; height: 12px; }
.filters { height: 43px; padding-top: 7px; margin-left: -7px; display: flex; align-items: center; gap: 10px; }
.fl { display: flex; align-items: center; }
.tbl { position: relative; width: 458px; height: 293px; background: #fff; border: solid #cdcdcd; border-width: 1px 1px 1px 0; }
.thumb { position: absolute; left: 444px; top: 19px; width: 9px; height: 21px; background: #ccc; border-radius: 5px; }
.trow { width: 399px; height: 23.700px; display: grid; grid-template-columns: 113px 1fr; align-items: center; padding-left: 3px; white-space: nowrap; }
.trow.thead { height: 26.500px; background: #7ab8f5; color: #fff; grid-template-columns: 225px 1fr; padding: 0; border-bottom: 1px solid #cfe0f2; }
.tc1 { padding-left: 40px; }
.trow.sel { width: 401px; background: #3398ff; color: #fff; outline: 2px solid #8a8a8a; position: relative; }
.dbtns { display: flex; justify-content: flex-end; gap: 8px; padding: 9px 16px 0 0; }
.btn { width: 100px; height: 32px; display: flex; align-items: center; justify-content: center; background: #f2f2f2; color: #555; border: 1px solid #d4d8de; border-radius: 4px; }
.btn.pri { width: 99px; background: #2c7fe0; color: #fff; border-color: #2c7fe0; }
.grip { position: absolute; right: 5px; bottom: 5px; width: 10px; height: 10px; }

/* speed toast */
.speed { position: absolute; right: 0; top: 541px; width: 72px; height: 51px; background: #2a2e3a; border-radius: 25px 0 0 25px; display: flex; flex-direction: column; justify-content: center; gap: 6px; padding-left: 14px; color: #eee; }
.sp { display: flex; align-items: baseline; font: 500 14px/20px "Noto Sans", sans-serif; white-space: nowrap; }
.sp b { font-weight: 500; }
.sp small { font-size: 11px; font-weight: 400; color: #8e929c; margin-left: 1px; }
.arr { width: 10px; height: 10px; flex: none; align-self: center; }
.up { margin-left: 6px; }
```
